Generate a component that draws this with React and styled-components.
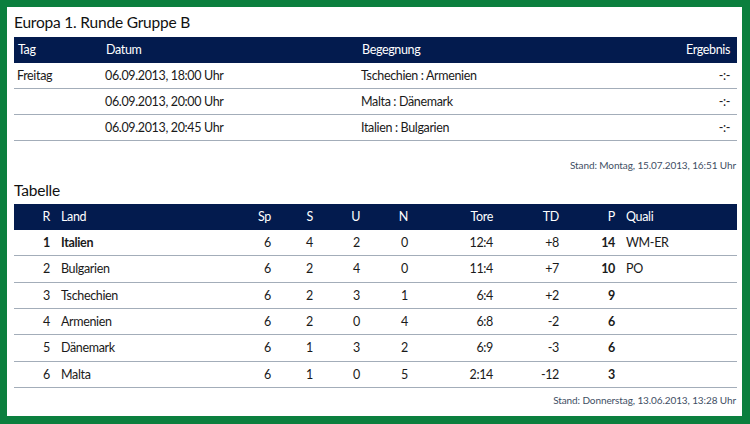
import { Fragment } from "react"
import styled, { createGlobalStyle } from "styled-components"

const GlobalStyle = createGlobalStyle`
  html, body {
    margin: 0;
    padding: 0;
    background: #0b7f3e;
  }
  body {
    font-family: Lato, "Open Sans", sans-serif;
    color: #1a1a1a;
  }
`

const Page = styled.div`
  margin: 7px 8px 8px 7px;
  height: 409px;
  background: #fff;
  padding: 0 5px 0 7px;
  box-sizing: border-box;
  overflow: hidden;
`

const Title = styled.h2`
  margin: 0;
  padding-top: ${(p) => p.$top || 0}px;
  font-size: 15.5px;
  letter-spacing: -0.2px;
  line-height: 22px;
  font-weight: 400;
  color: #111;
  margin-bottom: ${(p) => p.$bottom || 0}px;
`

const Grid = styled.div`
  display: grid;
  grid-template-columns: ${(p) => p.$cols};
  font-size: 12.5px;
  letter-spacing: -0.35px;
`

const HeadCell = styled.div`
  background: #031b4e;
  color: #fff;
  height: 26px;
  line-height: 26px;
  padding: 0 ${(p) => p.$padR ?? 5}px 0 ${(p) => p.$padL ?? 5}px;
  text-align: ${(p) => (p.$right ? "right" : "left")};
  white-space: nowrap;
`

const Cell = styled.div`
  height: ${(p) => p.$h || 25}px;
  line-height: ${(p) => p.$h || 25}px;
  border-bottom: 1px solid #a3adb9;
  padding: 0 ${(p) => p.$padR ?? 5}px 0 ${(p) => p.$padL ?? 5}px;
  text-align: ${(p) => (p.$right ? "right" : "left")};
  font-weight: ${(p) => (p.$bold ? 700 : 400)};
  white-space: nowrap;
`

const Stand = styled.div`
  margin-top: ${(p) => p.$top}px;
  padding-right: 1px;
  font-size: 10px;
  letter-spacing: -0.1px;
  line-height: 14px;
  text-align: right;
  color: #3e4e64;
`

const games = [
  { tag: "Freitag", datum: "06.09.2013, 18:00 Uhr", match: "Tschechien : Armenien" },
  { tag: "", datum: "06.09.2013, 20:00 Uhr", match: "Malta : Dänemark" },
  { tag: "", datum: "06.09.2013, 20:45 Uhr", match: "Italien : Bulgarien" },
]

const table = [
  ["1", "Italien", "6", "4", "2", "0", "12:4", "+8", "14", "WM-ER"],
  ["2", "Bulgarien", "6", "2", "4", "0", "11:4", "+7", "10", "PO"],
  ["3", "Tschechien", "6", "2", "3", "1", "6:4", "+2", "9", ""],
  ["4", "Armenien", "6", "2", "0", "4", "6:8", "-2", "6", ""],
  ["5", "Dänemark", "6", "1", "3", "2", "6:9", "-3", "6", ""],
  ["6", "Malta", "6", "1", "0", "5", "2:14", "-12", "3", ""],
]

const heads = ["R", "Land", "Sp", "S", "U", "N", "Tore", "TD", "P", "Quali"]
const rightCols = [0, 2, 3, 4, 5, 6, 7, 8]

export default function App() {
  return (
    <>
      <GlobalStyle />
      <Page>
        <Title $top={4} $bottom={4}>Europa 1. Runde Gruppe B</Title>
        <Grid $cols="88px 256px 1fr 120px">
          <HeadCell $padL={4}>Tag</HeadCell>
          <HeadCell $padL={4}>Datum</HeadCell>
          <HeadCell $padL={4}>Begegnung</HeadCell>
          <HeadCell $right $padR={7}>Ergebnis</HeadCell>
          {games.map((g) => (
            <Fragment key={g.datum}>
              <Cell $padL={3}>{g.tag}</Cell>
              <Cell $padL={3}>{g.datum}</Cell>
              <Cell $padL={3}>{g.match}</Cell>
              <Cell $right $padR={7}>-:-</Cell>
            </Fragment>
          ))}
        </Grid>
        <Stand $top={17}>Stand: Montag, 15.07.2013, 16:51 Uhr</Stand>
        <Title $top={7} $bottom={3}>Tabelle</Title>
        <Grid $cols="41px 181px 40px 42px 47px 48px 85px 66px 56px 1fr">
          {heads.map((h, i) => (
            <HeadCell key={h} $right={rightCols.includes(i)} $padL={i === 1 || i === 9 ? 6 : 5}>
              {h}
            </HeadCell>
          ))}
          {table.map((row, r) =>
            row.map((v, i) => (
              <Cell
                key={r + "-" + i}
                $h={25.33}
                $right={rightCols.includes(i)}
                $padL={i === 1 || i === 9 ? 6 : 5}
                $bold={(r === 0 && i < 2) || i === 8}
              >
                {v}
              </Cell>
            ))
          )}
        </Grid>
        <Stand $top={5}>Stand: Donnerstag, 13.06.2013, 13:28 Uhr</Stand>
      </Page>
    </>
  )
}
